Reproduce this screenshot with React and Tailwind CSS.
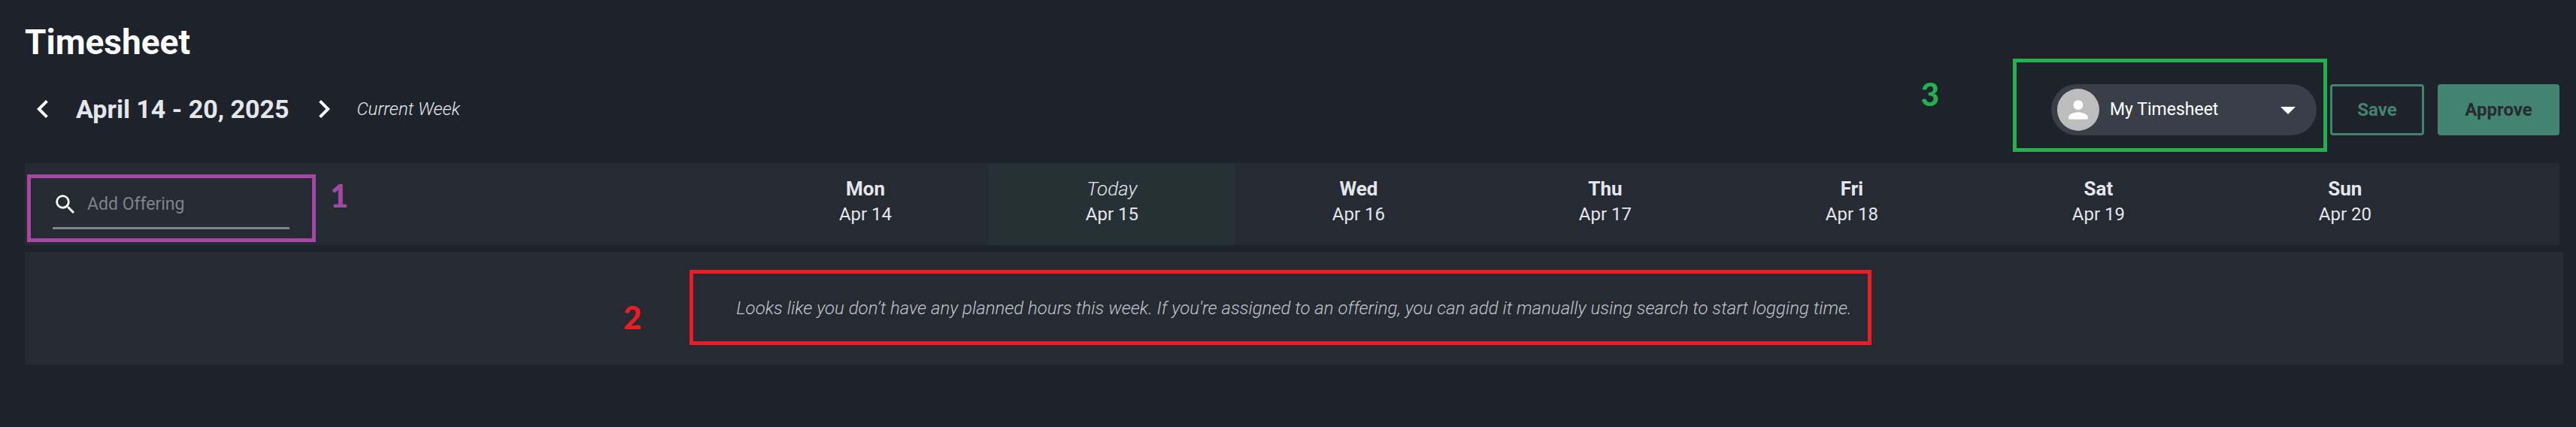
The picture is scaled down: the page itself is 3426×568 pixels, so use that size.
import React, { useState } from 'react'
import { MdArrowDropDown, MdChevronLeft, MdChevronRight, MdPerson, MdSearch } from 'react-icons/md'

const days = [
  { name: 'Mon', date: 'Apr 14' },
  { name: 'Today', date: 'Apr 15', today: true },
  { name: 'Wed', date: 'Apr 16' },
  { name: 'Thu', date: 'Apr 17' },
  { name: 'Fri', date: 'Apr 18' },
  { name: 'Sat', date: 'Apr 19' },
  { name: 'Sun', date: 'Apr 20' },
]

export default function App() {
  const [search, setSearch] = useState('')

  return (
    <main className="min-h-screen bg-[#1e222a] pl-[33px] pr-[22px] pt-7 pb-20 font-['Roboto',sans-serif] text-2xl text-[#e4e6ec]">
      <h1 className="text-[46px] leading-[56px] font-bold text-white">Timesheet</h1>

      {/* Week picker and actions */}
      <div className="mt-7 flex items-center justify-between">
        <div className="flex items-center pb-0.5">
          <button type="button" aria-label="Previous week" className="text-white">
            <MdChevronLeft className="size-12" />
          </button>
          <h2 className="mr-[22px] ml-5 text-[34px] leading-10 font-bold">April 14 - 20, 2025</h2>
          <button type="button" aria-label="Next week" className="text-white">
            <MdChevronRight className="size-12" />
          </button>
          <span className="ml-5 font-light italic">Current Week</span>
        </div>

        <div className="flex items-center gap-[18px]">
          <div className="relative flex h-[68px] w-[353px] items-center rounded-full bg-[#393e49]">
            <span className="ml-2 flex size-14 shrink-0 items-center justify-center rounded-full bg-[#bdbdbd] text-white">
              <MdPerson className="size-[38px]" />
            </span>
            <select
              aria-label="Timesheet owner"
              className="ml-3.5 h-full flex-1 appearance-none bg-transparent text-[23px] text-white outline-none"
            >
              <option>My Timesheet</option>
            </select>
            <MdArrowDropDown className="pointer-events-none mr-3.5 size-12 text-white" />
            <div className="pointer-events-none absolute -top-[34px] -right-[14px] -bottom-[22px] -left-[51px] border-5 border-[#22b14c]" />
            <span className="absolute -top-[12px] right-full mr-[149px] font-['Lato',sans-serif] text-[42px] leading-[50px] font-black text-[#22b14c]">3</span>
          </div>
          <button type="button" className="h-[68px] w-[125px] rounded-sm border-3 border-[#42846f] font-bold text-[#42846f]">
            Save
          </button>
          <button type="button" className="h-[68px] w-[162px] rounded-sm bg-[#42846f] font-bold text-[#262b33]">
            Approve
          </button>
        </div>
      </div>

      <table className="mt-[37px] w-full table-fixed border-collapse bg-[#262a32]">
        <thead>
          <tr className="h-[109px]">
            <th className="w-[28.3%] p-0 pt-2 text-left font-normal">
              <div className="relative ml-[37px] w-[315px]">
                <label className="flex h-[58px] items-center border-b-3 border-[#80838a] pb-1">
                  <MdSearch className="size-[34px] shrink-0 text-white" />
                  <input
                    type="text"
                    aria-label="Add offering"
                    placeholder="Add Offering"
                    value={search}
                    onChange={(e) => setSearch(e.target.value)}
                    className="ml-3 min-w-0 flex-1 bg-transparent text-[23px] outline-none placeholder:text-[#80838a]"
                  />
                </label>
                <div className="pointer-events-none absolute -top-[15px] -right-[35px] -bottom-[17px] -left-[34px] border-5 border-[#a349a4]" />
                <span className="absolute -top-[12px] left-full ml-[54px] font-['Lato',sans-serif] text-[42px] leading-[50px] font-black text-[#a349a4]">1</span>
              </div>
            </th>
            {days.map((day) => (
              <th key={day.date} className={day.today ? 'w-[9.73%] bg-[#263135] p-0 pb-2.5' : 'w-[9.73%] p-0 pb-2.5'}>
                <div className={day.today ? 'text-[26px] leading-9 font-light italic' : 'text-[26px] leading-9 font-bold'}>
                  {day.name}
                </div>
                <div className="leading-8 font-normal">{day.date}</div>
              </th>
            ))}
            <td />
          </tr>
        </thead>
      </table>

      {/* Empty state */}
      <div className="mt-[9px] -mr-[5px] flex h-[150px] items-center justify-center bg-[#262a32]">
        <p className="relative font-light text-[#c0c3cb] italic">
          Looks like you don’t have any planned hours this week. If you're assigned to an offering, you can add it manually using search to start logging time.
          <span className="pointer-events-none absolute -top-[35px] -right-[26px] -bottom-[33px] -left-[62px] border-5 border-[#ed1c24]" />
          <span className="absolute top-[3px] right-full mr-[126px] font-['Lato',sans-serif] text-[42px] leading-[50px] font-black text-[#ed1c24] not-italic">2</span>
        </p>
      </div>
    </main>
  )
}
